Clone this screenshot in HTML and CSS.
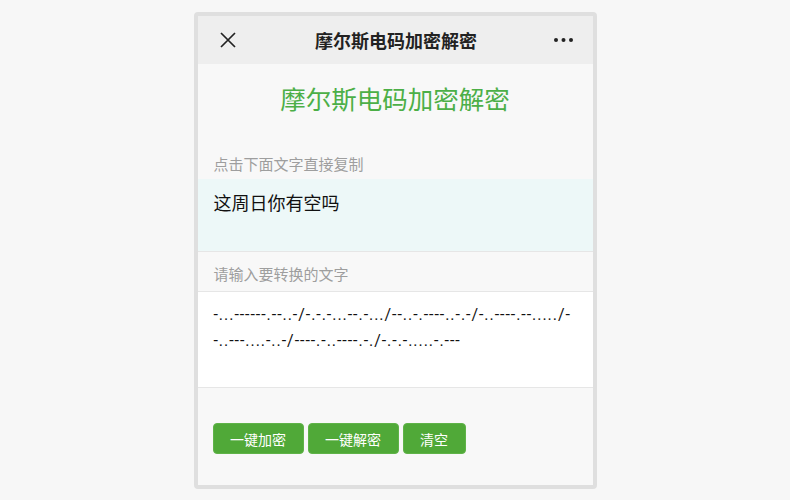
FILE: index.html
```html
<!DOCTYPE html>
<html lang="zh-CN">
<head>
  <meta charset="UTF-8" />
  <meta name="viewport" content="width=device-width, initial-scale=1.0">
  <title>摩尔斯电码加密解密</title>
  <link rel="stylesheet" href="styles.css">
</head>
<body>

  <div class="phone">
    <!-- 顶部导航栏 -->
    <div class="nav">
      <span class="nav-close">
        <svg width="16" height="16" viewBox="0 0 16 16">
          <path d="M1 1 L15 15 M15 1 L1 15" stroke="#222" stroke-width="1.7" fill="none" />
        </svg>
      </span>
      <span class="nav-title">摩尔斯电码加密解密</span>
      <span class="nav-more">
        <svg width="19" height="6" viewBox="0 0 19 6">
          <circle cx="2" cy="3" r="2" fill="#222" />
          <circle cx="9.5" cy="3" r="2" fill="#222" />
          <circle cx="17" cy="3" r="2" fill="#222" />
        </svg>
      </span>
    </div>

    <h1 class="page-title">摩尔斯电码加密解密</h1>

    <div class="label first">点击下面文字直接复制</div>
    <div class="result" id="resultBox">这周日你有空吗</div>

    <div class="label">请输入要转换的文字</div>
    <div class="input" id="inputBox">-...------.--..-/-.-.-...--.-.../--..-.----..-.-/-..----.--...../--..---....-..-/----.-..----.-./-.-.-.....-.---</div>

    <div class="actions">
      <button class="btn">一键加密</button>
      <button class="btn">一键解密</button>
      <button class="btn">清空</button>
    </div>
  </div>

</body>
</html>
```

FILE: styles.css
```css
* {
  margin: 0;
  padding: 0;
  box-sizing: border-box;
}

body {
  font-family: "Roboto", "Noto Sans CJK SC", sans-serif;
  background: #f7f7f7;
}

/* 手机外框 */
.phone {
  width: 403px;
  height: 477px;
  margin: 12px auto 0;
  border: 4px solid #dfdfdf;
  border-radius: 4px;
  background: #f8f8f8;
  overflow: hidden;
}

/* 导航栏 */
.nav {
  height: 48px;
  background: #eeeeee;
  display: grid;
  grid-template-columns: 1fr auto 1fr;
  align-items: center;
  padding: 0 20px 0 22px;
}

.nav-close svg,
.nav-more svg {
  display: block;
}

.nav-more {
  justify-self: end;
}

.nav-title {
  font-size: 18px;
  font-weight: bold;
  color: #222;
}

.page-title {
  font-size: 25.5px;
  font-weight: normal;
  line-height: 36px;
  color: #4caf47;
  text-align: center;
  padding-top: 18px;
}

.label {
  font-size: 15px;
  line-height: 20px;
  color: #9e9e9e;
  padding: 0 16px;
  margin: 13px 0 6px;
}

.label.first {
  margin: 37px 0 4px;
}

.result {
  height: 73px;
  background: #edf8f8;
  border-bottom: 1px solid #e6e6e6;
  padding: 13px 16px;
  font-size: 18px;
  line-height: 24px;
  color: #111;
}

.input {
  height: 97px;
  background: #fff;
  border-top: 1px solid #e6e6e6;
  border-bottom: 1px solid #e6e6e6;
  padding: 10px 14px 0 16px;
  font-size: 16px;
  line-height: 26px;
  letter-spacing: 0.95px;
  color: #111;
  word-break: break-all;
}

.actions {
  display: flex;
  gap: 4px;
  padding: 35px 16px 0 15px;
}

.btn {
  height: 31px;
  padding: 0 16.5px;
  font-family: inherit;
  font-size: 14px;
  color: #fff;
  background: #50a938;
  border: 1px solid #5fb348;
  border-radius: 4px;
  cursor: pointer;
}
```
